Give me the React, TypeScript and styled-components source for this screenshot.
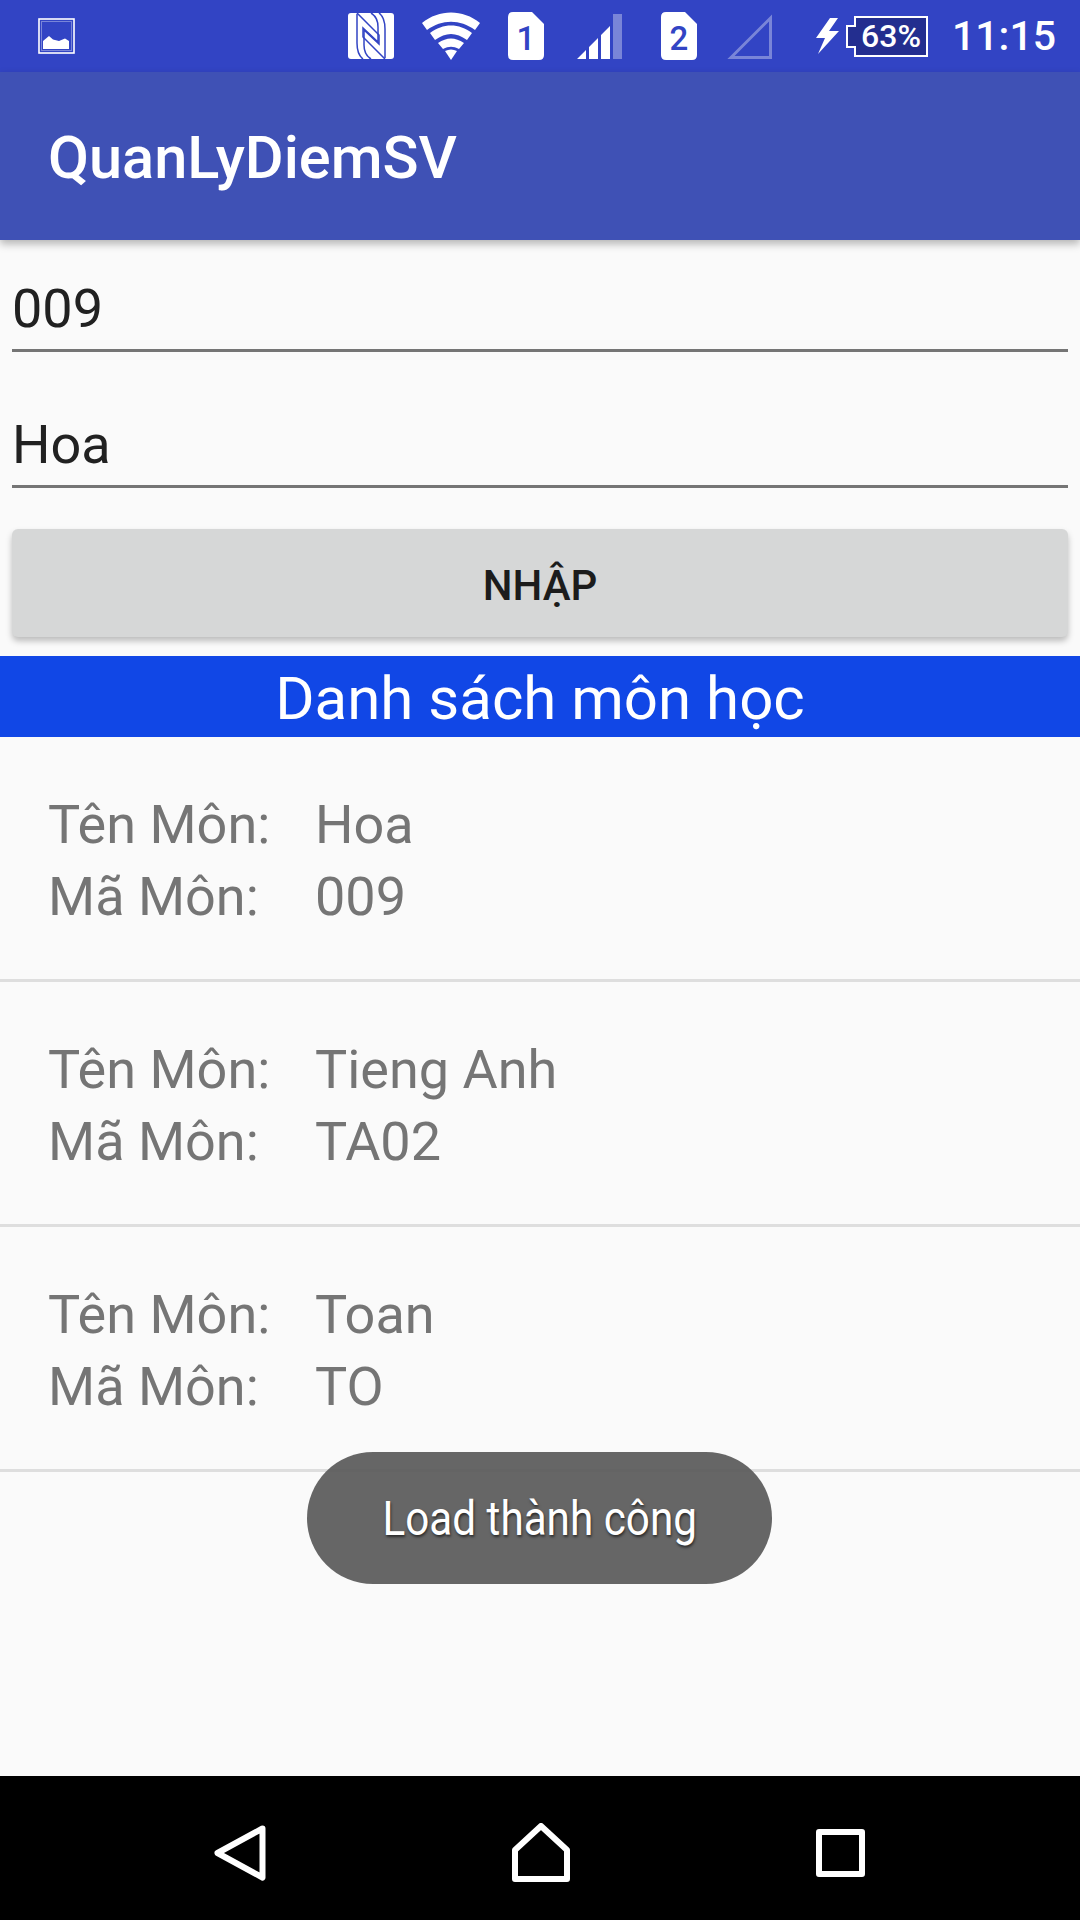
import React from 'react';
import styled, { createGlobalStyle } from 'styled-components';

const subjects = [
  { name: 'Hoa', code: '009' },
  { name: 'Tieng Anh', code: 'TA02' },
  { name: 'Toan', code: 'TO' },
];

export default function App() {
  return (
    <>
      <GlobalStyle />
      <Screen>
        <StatusBar>
          <svg width="37" height="36" viewBox="0 0 37 36">
            <rect x="1" y="1" width="35" height="34" fill="none" stroke="#fff" strokeWidth="1.6" />
            <rect x="3.5" y="3.5" width="30" height="29" fill="none" stroke="#fff" strokeWidth="1" opacity="0.35" />
            <path d="M5 31V23L11 18L15 21.500L21 23L27 20.500L31 23V31Z" fill="#fff" />
          </svg>
          <StatusIcons>
            <IconSlot $gap={0}>
              <svg width="46" height="46" viewBox="0 0 46 46">
                <rect width="46" height="46" rx="3" fill="#fff" />
                <g fill="none" stroke="#3244c4" strokeWidth="1.5">
                  <path d="M9 0L31 22V31L16 17V32C16 38 18 43 23 46" />
                  <path d="M9 1V30C9 38 11 43 15 46" />
                  <path d="M37 46L15 24V15L30 29V14C30 8 28 3 23 0" />
                  <path d="M37 45V16C37 8 35 3 31 0" />
                </g>
              </svg>
            </IconSlot>
            <IconSlot $gap={28}>
              <svg width="58" height="48" viewBox="0 0 58 48">
                <path d="M0 11C17 -3 41 -3 58 11L53 18C38 7 20 7 5 18Z" fill="#fff" />
                <path d="M8 21C21 11 37 11 50 21L45 28C34 20 24 20 13 28Z" fill="#fff" />
                <path d="M16 31C25 25 33 25 42 31L37 37C31 34 27 34 21 37Z" fill="#fff" />
                <path d="M23 39C27 37 31 37 35 39L29 48Z" fill="#fff" />
              </svg>
            </IconSlot>
            <IconSlot $gap={28}>
              <SimCard label="1" />
            </IconSlot>
            <IconSlot $gap={33}>
              <svg width="45" height="45" viewBox="0 0 45 45">
                <path d="M36 0L45 0V45H36Z" fill="#fff" opacity="0.35" />
                <path d="M0 45L9 36V45Z M12 33L21 24V45H12Z M24 21L33 12V45H24Z" fill="#fff" />
              </svg>
            </IconSlot>
            <IconSlot $gap={39}>
              <SimCard label="2" />
            </IconSlot>
            <IconSlot $gap={30}>
              <svg width="45" height="45" viewBox="0 0 45 45">
                <path d="M4 43.500L43.500 4V43.500Z" fill="none" stroke="#fff" strokeWidth="3" opacity="0.35" />
              </svg>
            </IconSlot>
            <IconSlot $gap={44}>
              <svg width="23" height="36" viewBox="0 0 23 36">
                <path d="M14 0L0 20H9L2 36L23 13H13L22 0Z" fill="#fff" />
              </svg>
            </IconSlot>
            <IconSlot $gap={7}>
              <svg width="82" height="41" viewBox="0 0 82 41">
                <path d="M9 10H1V31H9V40H81V1H9Z" fill="#232e8f" stroke="#fff" strokeWidth="2" />
                <BatteryText x="45" y="31" textAnchor="middle">63%</BatteryText>
              </svg>
            </IconSlot>
            <Clock>11:15</Clock>
          </StatusIcons>
        </StatusBar>

        <AppBar>QuanLyDiemSV</AppBar>

        <Form>
          <Field>009</Field>
          <Field>Hoa</Field>
          <SubmitButton>NHẬP</SubmitButton>
        </Form>

        <ListTitle>Danh sách môn học</ListTitle>

        <SubjectList>
          {subjects.map((subject) => (
            <SubjectRow key={subject.code}>
              <span>Tên Môn:</span>
              <span>{subject.name}</span>
              <span>Mã Môn:</span>
              <span>{subject.code}</span>
            </SubjectRow>
          ))}
          <Toast><ToastText>Load thành công</ToastText></Toast>
        </SubjectList>

        <NavBar>
          <svg width="52" height="56" viewBox="0 0 52 56">
            <path d="M48.500 3.500L3.500 28L48.500 52.500Z" fill="none" stroke="#fff" strokeWidth="6" strokeLinejoin="round" />
          </svg>
          <svg width="58" height="59" viewBox="0 0 58 59">
            <path d="M3 56V27L29 3L55 27V56Z" fill="none" stroke="#fff" strokeWidth="6" strokeLinejoin="round" />
          </svg>
          <svg width="49" height="48" viewBox="0 0 49 48">
            <rect x="3" y="3" width="43" height="42" fill="none" stroke="#fff" strokeWidth="6" strokeLinejoin="round" />
          </svg>
        </NavBar>
      </Screen>
    </>
  );
}

function SimCard({ label }: { label: string }) {
  return (
    <svg width="36" height="48" viewBox="0 0 36 48">
      <path d="M5 0H24L36 12V43Q36 48 31 48H5Q0 48 0 43V5Q0 0 5 0Z" fill="#fff" />
      <SimText x="18" y="38" textAnchor="middle">{label}</SimText>
    </svg>
  );
}

const GlobalStyle = createGlobalStyle`
  html, body {
    margin: 0;
    padding: 0;
    background: #fafafa;
    font-family: Roboto, "Liberation Sans", sans-serif;
  }
`;

const Screen = styled.div`
  width: 1080px;
  height: 1920px;
  display: flex;
  flex-direction: column;
  overflow: hidden;
  background: #fafafa;
`;

const StatusBar = styled.div`
  height: 72px;
  flex: none;
  display: flex;
  align-items: center;
  justify-content: space-between;
  padding: 0 24px 0 38px;
  background: #3244c4;
`;

const StatusIcons = styled.div`
  display: flex;
  align-items: center;
`;

const IconSlot = styled.div<{ $gap: number }>`
  display: flex;
  margin-left: ${({ $gap }) => $gap}px;
`;

const SimText = styled.text`
  font-family: Roboto, sans-serif;
  font-size: 33px;
  font-weight: 500;
  fill: #3244c4;
`;

const BatteryText = styled.text`
  font-family: Roboto, sans-serif;
  font-size: 32px;
  font-weight: 500;
  fill: #fff;
`;

const Clock = styled.div`
  margin-left: 24px;
  color: #fff;
  font-size: 41px;
  font-weight: 500;
  white-space: nowrap;
`;

const AppBar = styled.div`
  height: 168px;
  flex: none;
  box-sizing: border-box;
  display: flex;
  align-items: center;
  padding: 3px 0 0 48px;
  background: #3f51b5;
  color: #fff;
  font-size: 59.5px;
  font-weight: 500;
  box-shadow: 0 4px 8px rgba(0, 0, 0, 0.28);
  position: relative;
`;

const Form = styled.div`
  display: flex;
  flex-direction: column;
  gap: 24px;
  padding: 0 12px 19px;
`;

const Field = styled.div`
  height: 112px;
  box-sizing: border-box;
  padding-top: 37px;
  border-bottom: 3px solid #757575;
  color: #212121;
  font-size: 54px;
  line-height: 64px;

  & + & {
    margin-bottom: 17px;
  }
`;

const SubmitButton = styled.div`
  height: 108px;
  box-sizing: border-box;
  display: flex;
  align-items: center;
  justify-content: center;
  padding-top: 4px;
  border-radius: 6px;
  background: #d6d7d7;
  color: #1c1c1c;
  font-size: 42px;
  font-weight: 500;
  box-shadow: 0 4px 6px rgba(0, 0, 0, 0.25);
`;

const ListTitle = styled.div`
  height: 81px;
  flex: none;
  box-sizing: border-box;
  display: flex;
  align-items: center;
  justify-content: center;
  padding-top: 4px;
  background: #1147e6;
  color: #fff;
  font-size: 60px;
`;

const SubjectList = styled.div`
  flex: 1;
  position: relative;
`;

const SubjectRow = styled.div`
  height: 245px;
  box-sizing: border-box;
  display: grid;
  grid-template-columns: 267px 1fr;
  align-content: center;
  padding: 5px 0 0 48px;
  border-bottom: 3px solid #dedede;
  color: #757575;
  font-size: 54px;
  line-height: 72px;
`;

const Toast = styled.div`
  position: absolute;
  left: 307px;
  top: 715px;
  width: 465px;
  height: 132px;
  display: flex;
  align-items: center;
  justify-content: center;
  border-radius: 66px;
  background: rgba(92, 92, 92, 0.94);
`;

const ToastText = styled.span`
  color: #fff;
  font-size: 48px;
  transform: scaleX(0.88);
  white-space: nowrap;
  text-shadow: 1px 2px 3px rgba(0, 0, 0, 0.6);
`;

const NavBar = styled.div`
  height: 144px;
  flex: none;
  box-sizing: border-box;
  display: flex;
  align-items: center;
  justify-content: space-between;
  padding: 9px 215px 0 214px;
  background: #000;
`;
